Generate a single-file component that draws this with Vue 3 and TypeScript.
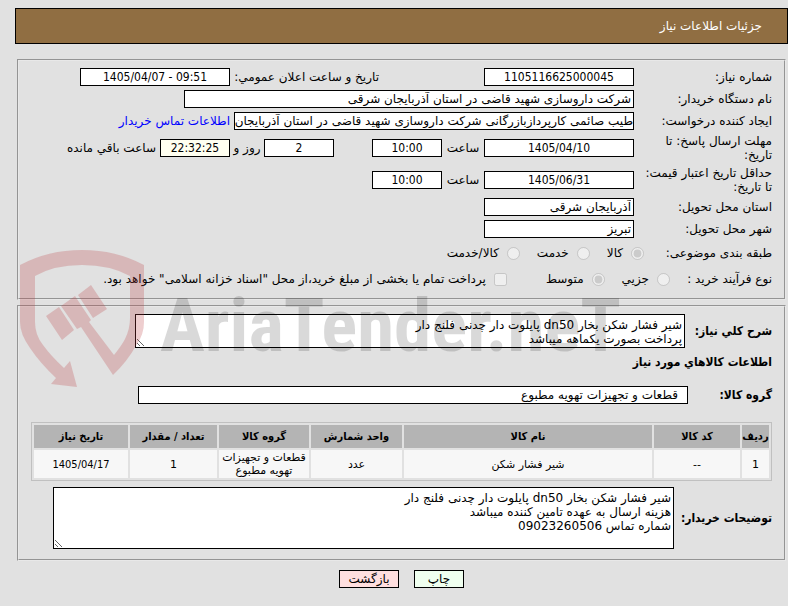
<script setup lang="ts">
interface Item {
  row: string
  code: string
  name: string
  unit: string
  group: string
  amount: string
  date: string
}

const columns: { key: keyof Item; title: string }[] = [
  { key: 'row', title: 'ردیف' },
  { key: 'code', title: 'کد کالا' },
  { key: 'name', title: 'نام کالا' },
  { key: 'unit', title: 'واحد شمارش' },
  { key: 'group', title: 'گروه کالا' },
  { key: 'amount', title: 'تعداد / مقدار' },
  { key: 'date', title: 'تاریخ نیاز' },
]

const items: Item[] = [
  {
    row: '1',
    code: '--',
    name: 'شیر فشار شکن',
    unit: 'عدد',
    group: 'قطعات و تجهیزات تهویه مطبوع',
    amount: '1',
    date: '1405/04/17',
  },
]

const summary = 'شیر فشار شکن بخار dn50 پایلوت دار چدنی فلنج دار\nپرداخت بصورت یکماهه میباشد'
const notes =
  'شیر فشار شکن بخار dn50 پایلوت دار چدنی فلنج دار\nهزینه ارسال به عهده تامین کننده میباشد\nشماره تماس 09023260506'
</script>

<template>
  <main class="page" dir="rtl">
    <header class="banner">جزئیات اطلاعات نیاز</header>

    <section class="panel info">
      <div class="row">
        <label class="name" for="number">شماره نیاز:</label>
        <input id="number" class="num w150" value="1105116625000045" readonly />
        <label class="announce" for="announced">تاریخ و ساعت اعلان عمومي:</label>
        <input id="announced" class="num w150" dir="ltr" value="1405/04/07 - 09:51" readonly />
      </div>
      <div class="row">
        <label class="name" for="org">نام دستگاه خریدار:</label>
        <input id="org" class="w450" value="شرکت داروسازی شهید قاضی در استان آذربایجان شرقی" readonly />
      </div>
      <div class="row">
        <label class="name" for="creator">ایجاد کننده درخواست:</label>
        <input id="creator" class="w400" value="طیب صائمی کارپردازبازرگانی شرکت داروسازی شهید قاضی در استان آذربایجان" readonly />
        <a class="contact" href="#contact">اطلاعات تماس خریدار</a>
      </div>
      <div class="row tall">
        <label class="name" for="deadline">مهلت ارسال پاسخ: تا تاریخ:</label>
        <input id="deadline" class="num w150" value="1405/04/10" readonly />
        <label class="unit" for="deadline-time">ساعت</label>
        <input id="deadline-time" class="num w70" value="10:00" readonly />
        <input id="days" class="num w70 days" value="2" readonly />
        <label class="unit small" for="days">روز و</label>
        <input id="left" class="num w70 timer" value="22:32:25" readonly />
        <label class="after" for="left">ساعت باقي مانده</label>
      </div>
      <div class="row tall">
        <label class="name" for="valid">حداقل تاریخ اعتبار قیمت: تا تاریخ:</label>
        <input id="valid" class="num w150" value="1405/06/31" readonly />
        <label class="unit" for="valid-time">ساعت</label>
        <input id="valid-time" class="num w70" value="10:00" readonly />
      </div>
      <div class="row">
        <label class="name" for="province">استان محل تحویل:</label>
        <input id="province" class="w150" value="آذربایجان شرقی" readonly />
      </div>
      <div class="row">
        <label class="name" for="city">شهر محل تحویل:</label>
        <input id="city" class="w150" value="تبریز" readonly />
      </div>
      <div class="row choices">
        <span class="subject">طبقه بندی موضوعی:</span>
        <label><input type="radio" name="subject" checked disabled /><span>کالا</span></label>
        <label><input type="radio" name="subject" disabled /><span>خدمت</span></label>
        <label><input type="radio" name="subject" disabled /><span>کالا/خدمت</span></label>
      </div>
      <div class="row choices">
        <span class="process">نوع فرآیند خرید :</span>
        <label><input type="radio" name="process" disabled /><span>جزیي</span></label>
        <label class="medium"><input type="radio" name="process" checked disabled /><span>متوسط</span></label>
        <label><input type="checkbox" disabled /><span>پرداخت تمام یا بخشی از مبلغ خرید،از محل "اسناد خزانه اسلامی" خواهد بود.</span></label>
      </div>
    </section>

    <section class="panel goods">
      <div class="line">
        <label class="bold summary-name" for="summary">شرح كلي نياز:</label>
        <textarea id="summary" class="summary" readonly :value="summary"></textarea>
      </div>
      <h2 class="bold title">اطلاعات كالاهاي مورد نياز</h2>
      <div class="line group">
        <label class="bold group-name" for="group">گروه کالا:</label>
        <input id="group" class="group-input" value="قطعات و تجهیزات تهویه مطبوع" readonly />
      </div>
      <table>
        <thead>
          <tr>
            <th v-for="c in columns" :key="c.key" :class="'col-' + c.key">{{ c.title }}</th>
          </tr>
        </thead>
        <tbody>
          <tr v-for="item in items" :key="item.row">
            <td v-for="c in columns" :key="c.key" :class="'col-' + c.key">{{ item[c.key] }}</td>
          </tr>
        </tbody>
      </table>
      <div class="line">
        <label class="bold notes-name" for="notes">توضیحات خریدار:</label>
        <textarea id="notes" class="notes" readonly :value="notes"></textarea>
      </div>
    </section>

    <footer class="actions">
      <button type="button" class="print">چاپ</button>
      <button type="button" class="back">بازگشت</button>
    </footer>

    <div class="watermark" dir="ltr">
      <svg width="126" height="138" viewBox="0 0 126 138" aria-hidden="true">
        <path
          fill-rule="evenodd"
          d="M0 15 Q28 0 62 0 T124 15 V72 Q124 84 117 94 Q107 112 93 125 L61 77 L57 79 L41 56 L55 46 L71 70 L69 72 L94 105 Q102 95 105 89 Q110 79 110 68 V26 Q90 15 62 15 T15 26 V72 Q15 85 23 95 Q31 106 44 118 L50 111 L57 137 L31 134 L36 128 Q20 113 10 98 Q0 84 0 72 Z M26 66 L39 57 L54 80 L42 90 Z M58 45 L71 35 L87 59 L73 68 Z"
        />
      </svg>
      <span>AriaTender.neT</span>
    </div>
  </main>
</template>

<style>
body {
  background: #e1e1e1;
}
</style>

<style scoped>
* {
  box-sizing: border-box;
}
.page {
  position: relative;
  padding: 8px 0 16px 15px;
  color: #000;
  font: 12px/14px 'DejaVu Sans', sans-serif;
}
.banner {
  padding: 10px 25px;
  border: 1px solid #000;
  background: #906e42;
  color: #fff;
}
.panel {
  margin: 0 2px;
  border: 2px groove #e8e8e8;
  padding: 5px 12px;
}
.info {
  margin-top: 15px;
  padding-bottom: 6px;
}
.goods {
  margin-top: 5px;
  padding: 7px 12px 10px;
}
.row {
  display: flex;
  align-items: center;
  min-height: 22px;
  white-space: nowrap;
}
.tall {
  min-height: 32px;
}
.name {
  flex: 0 0 138px;
  padding-left: 2px;
}
.tall .name {
  white-space: normal;
}
input,
textarea,
button {
  border: 1px solid #000;
  border-radius: 0;
  background: #fff;
  color: #000;
  font: inherit;
}
input {
  height: 18px;
  padding: 0 2px;
}
.num,
.bold,
th,
.col-date {
  font-family: 'DejaVu Sans Condensed', 'DejaVu Sans', sans-serif;
}
.num {
  text-align: center;
}
.w70 {
  width: 70px;
}
.w150 {
  width: 150px;
}
.w400 {
  width: 400px;
  padding: 0;
}
.w450 {
  width: 450px;
}
.announce {
  width: 254px;
  padding-right: 105px;
}
.contact {
  margin-right: 4px;
  color: #00f;
  text-decoration: none;
}
.unit {
  width: 42px;
  text-align: center;
}
.small {
  width: 34px;
}
.days {
  margin-right: 38px;
}
.timer {
  background: #fffff0;
}
.after {
  margin-right: 4px;
}
.choices {
  min-height: 26px;
  gap: 17px;
}
.choices label {
  display: flex;
  align-items: center;
  gap: 8px;
}
.choices input {
  width: 13px;
  height: 13px;
  margin: 0;
}
.subject {
  width: 111px;
}
.process {
  width: 85px;
}
.medium {
  margin-left: 22px;
}
.line {
  display: flex;
  align-items: center;
  gap: 4px;
}
.bold {
  margin: 0;
  font-size: 12px;
  font-weight: bold;
  white-space: nowrap;
}
textarea {
  display: block;
  padding: 3px 2px;
}
.summary-name {
  width: 83px;
}
.notes-name {
  width: 94px;
}
.summary {
  width: 550px;
  height: 34px;
}
.notes {
  width: 621px;
  height: 62px;
}
.title {
  padding-top: 7px;
}
.group {
  margin: 17px 0 18px;
}
.group-name {
  width: 80px;
}
.group-input {
  width: 550px;
  padding: 0 9px;
}
table {
  width: 741px;
  margin-bottom: 6px;
  border: 1px solid #c0c0c0;
  border-spacing: 2px;
  table-layout: fixed;
  font-size: 11px;
  line-height: 13px;
  text-align: center;
}
th {
  height: 23px;
  padding: 0;
  background: #b4b4b4;
}
td {
  height: 28px;
  padding: 0;
  background: #f7f7f7;
}
.col-row {
  width: 27px;
}
.col-code {
  width: 86px;
}
.col-unit {
  width: 91px;
}
.col-group {
  width: 90px;
}
.col-amount {
  width: 87px;
}
.col-date {
  width: 94px;
}
.actions {
  display: flex;
  justify-content: center;
  gap: 15px;
  padding-top: 9px;
}
button {
  height: 18px;
  padding: 0;
}
.print {
  width: 50px;
  background: #efffef;
}
.back {
  width: 60px;
  background: #ffdfdf;
}
.watermark {
  position: absolute;
  top: 250px;
  left: 20px;
  display: flex;
  gap: 14px;
  pointer-events: none;
}
.watermark path {
  fill: rgba(187, 60, 62, 0.25);
}
.watermark span {
  padding-top: 30px;
  color: rgba(0, 0, 0, 0.15);
  font: bold 75px/90px 'Roboto Condensed', Roboto, sans-serif;
}
</style>
